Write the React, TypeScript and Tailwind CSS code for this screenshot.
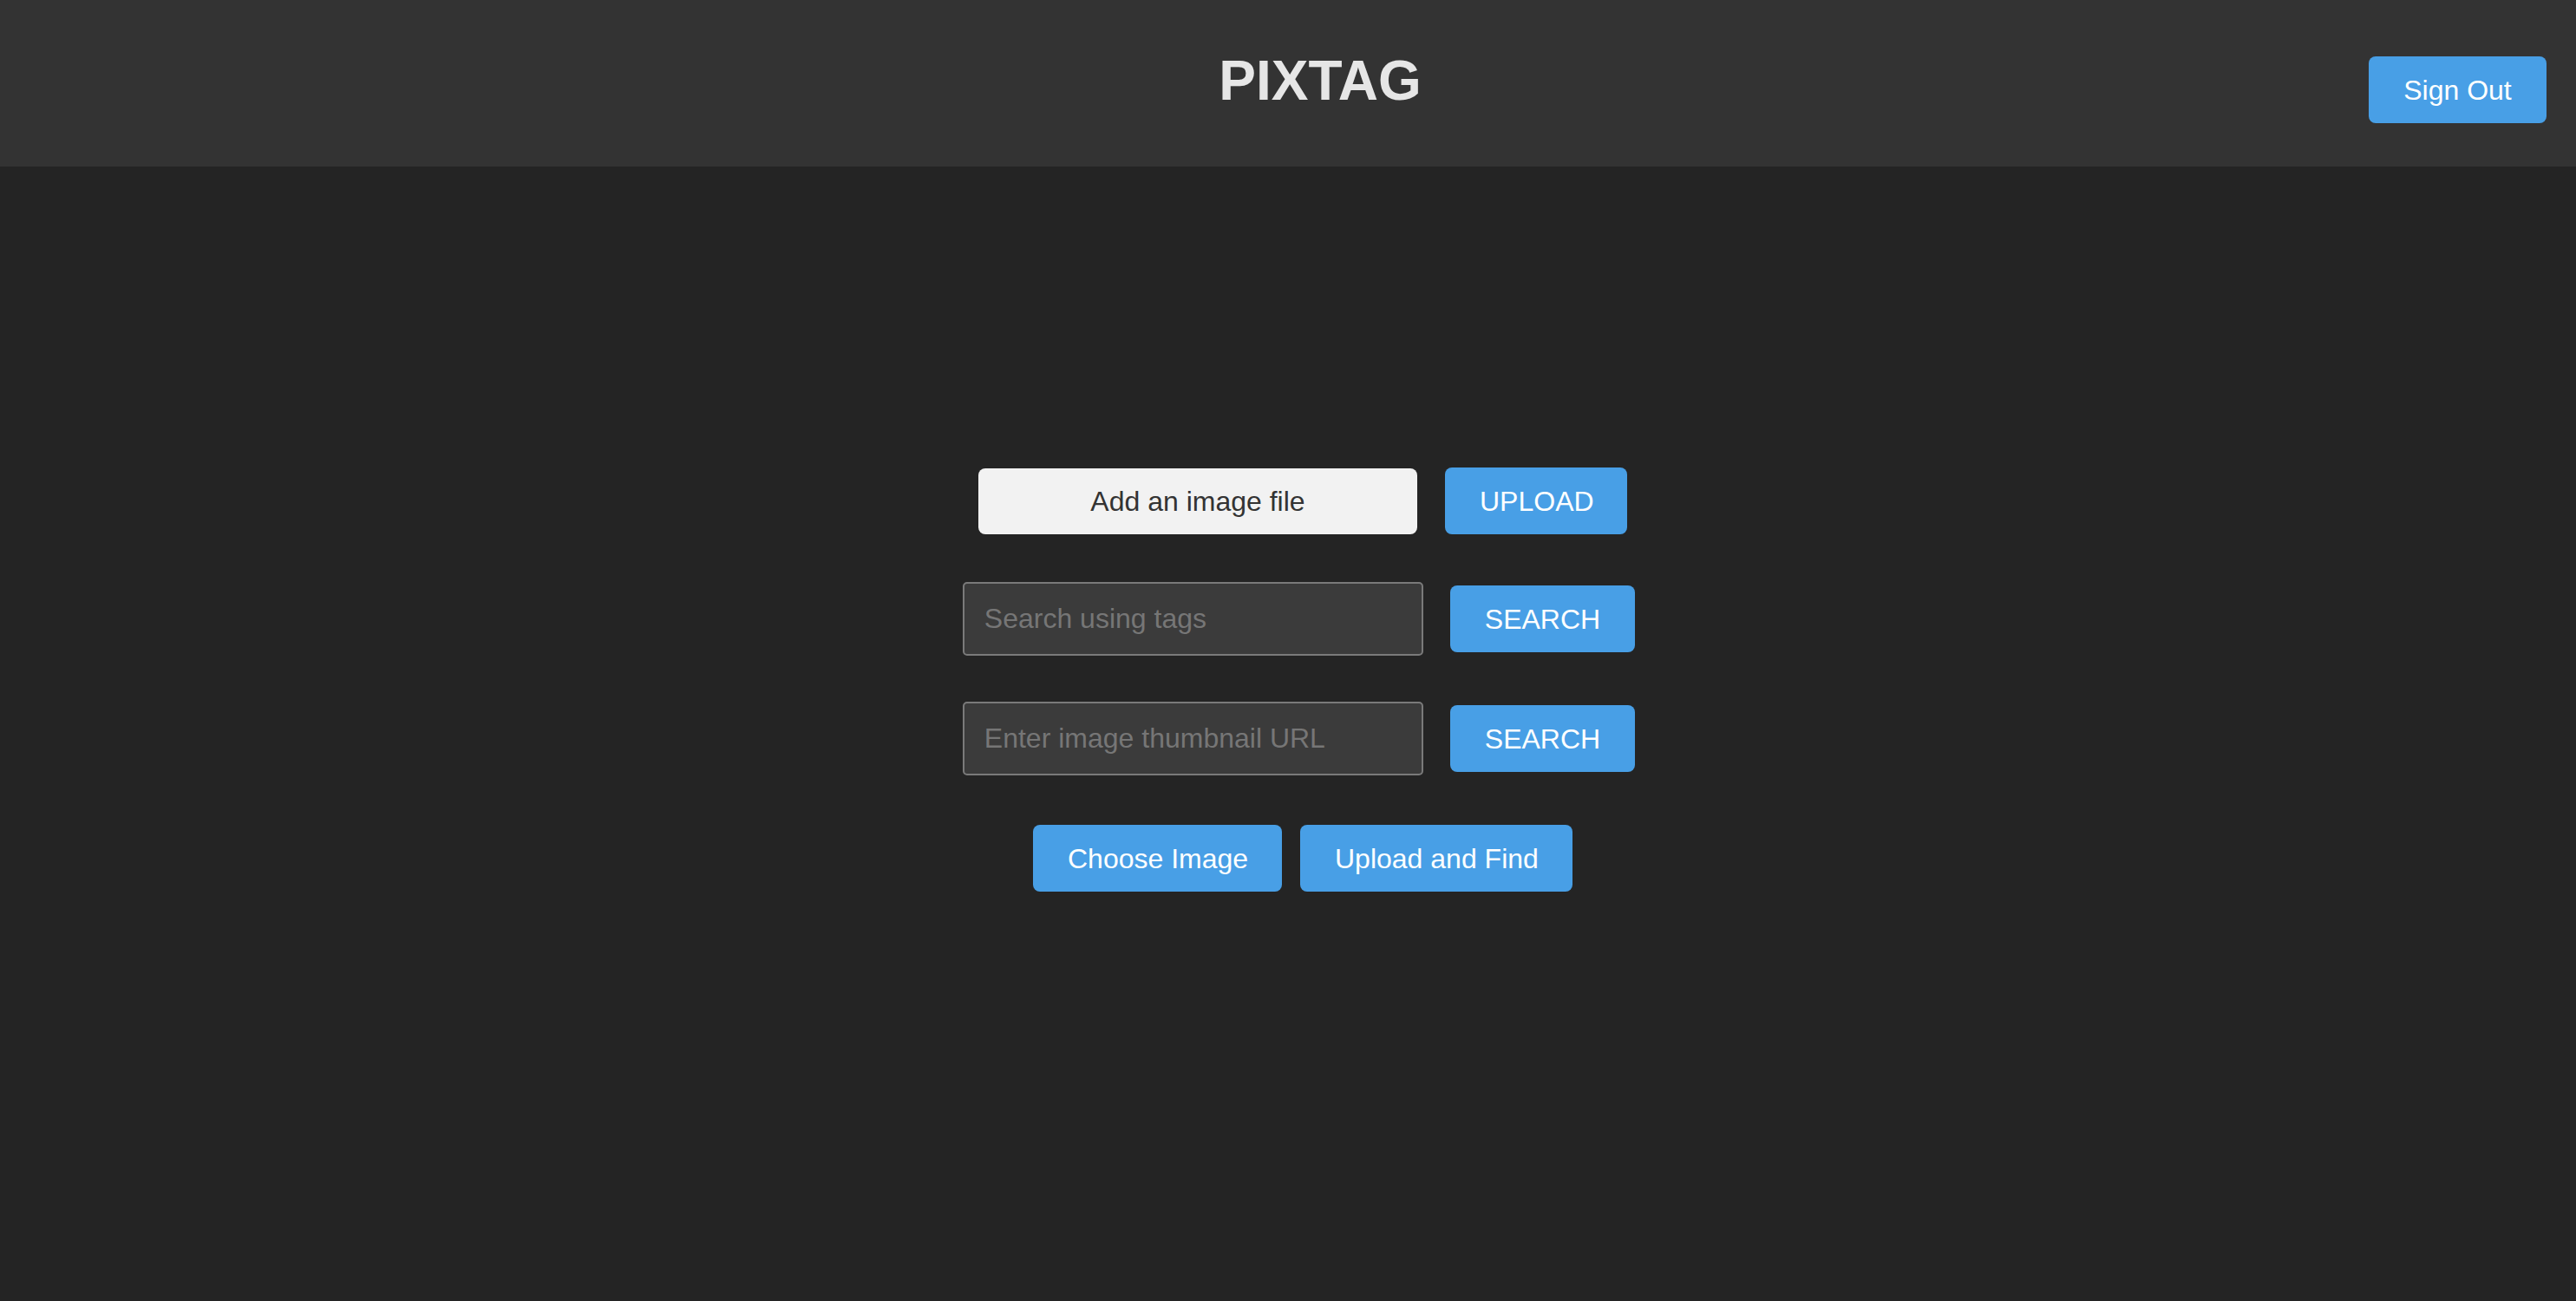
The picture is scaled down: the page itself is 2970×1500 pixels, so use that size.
const font = { fontFamily: '"Liberation Sans", Arial, sans-serif' };

function BlueButton({ label, className = "" }: { label: string; className?: string }) {
  return (
    <button
      className={
        "h-[77px] px-[40px] rounded-[8px] bg-[#489fe6] text-white text-[32px] leading-none whitespace-nowrap " +
        className
      }
    >
      {label}
    </button>
  );
}

function SearchRow({ placeholder, className = "" }: { placeholder: string; className?: string }) {
  return (
    <div className={"flex items-center gap-[31px] " + className}>
      <input
        placeholder={placeholder}
        className="w-[531px] h-[85px] border-2 border-[#7a7a7a] rounded-[5px] bg-[#3b3b3b] pl-[23px] text-[32px] text-[#dddddd] placeholder:text-[#767676] outline-none"
        style={font}
      />
      <BlueButton label="SEARCH" />
    </div>
  );
}

export default function App() {
  return (
    <div className="min-h-[1500px] bg-[#242424] flex flex-col" style={font}>
      <header className="h-[192px] bg-[#333333] flex pr-[34px]">
        <h1 className="flex-1 self-center pl-[313px] text-center text-[64px] font-bold text-[#e6e6e6] leading-none mb-[6px]">
          PIXTAG
        </h1>
        <BlueButton label="Sign Out" className="mt-[65px] w-[205px] px-0" />
      </header>

      <main className="flex flex-col items-center pl-[34px] pt-[347px]">
        <div className="flex items-center gap-[32px]">
          <label className="w-[506px] h-[76px] rounded-[8px] bg-[#f2f2f2] text-[#333333] text-[32px] flex items-center justify-center cursor-pointer">
            Add an image file
          </label>
          <BlueButton label="UPLOAD" className="w-[210px] px-0" />
        </div>

        <SearchRow placeholder="Search using tags" className="mt-[55px] -ml-[9px]" />
        <SearchRow placeholder="Enter image thumbnail URL" className="mt-[53px] -ml-[9px]" />

        <div className="flex items-center gap-[21px] mt-[57px]">
          <BlueButton label="Choose Image" className="w-[287px] px-0" />
          <BlueButton label="Upload and Find" className="w-[314px] px-0" />
        </div>
      </main>
    </div>
  );
}
